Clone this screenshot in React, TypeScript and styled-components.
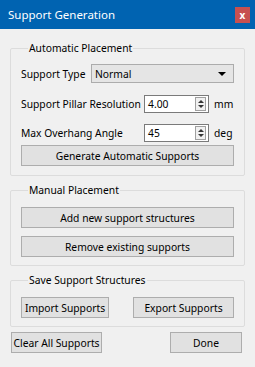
import React from "react";
import styled, { createGlobalStyle } from "styled-components";

const GlobalStyle = createGlobalStyle`
  html, body {
    margin: 0;
    padding: 0;
    background: #f0f0f0;
  }
  body {
    font-family: "Noto Sans", "Open Sans", sans-serif;
    font-size: 10.3px;
    color: #000;
  }
`;

const Window = styled.div`
  width: 255px;
  height: 367px;
  background: #f0f0f0;
  display: flex;
  flex-direction: column;
  overflow: hidden;
`;

const TitleBar = styled.div`
  height: 29px;
  background: #0063b1;
  display: flex;
  align-items: center;
  padding: 0 5px 0 8px;
  color: #fff;
  font-size: 11.5px;
  flex-shrink: 0;
`;

const Title = styled.span`
  flex: 1;
  margin-top: -1px;
`;

const CloseButton = styled.div`
  width: 15px;
  height: 16px;
  background: #c75050;
  color: #fff;
  font-size: 10px;
  font-weight: bold;
  display: flex;
  align-items: center;
  justify-content: center;
  line-height: 1;
`;

const Body = styled.div`
  padding: 12px 10px 0 10px;
  display: flex;
  flex-direction: column;
`;

const Group = styled.fieldset<{ $pt: number; $pb: number; $mb: number }>`
  margin: 0 0 ${(p) => p.$mb}px 0;
  padding: ${(p) => p.$pt}px 10px ${(p) => p.$pb}px 10px;
  border: 1px solid #dcdcdc;
  border-radius: 2px;
  min-width: 0;
  display: flex;
  flex-direction: column;
`;

const Legend = styled.legend`
  padding: 0 1px;
  margin-left: 7px;
  line-height: 14px;
`;

const Row = styled.div<{ $mt?: number }>`
  display: flex;
  align-items: center;
  margin-top: ${(p) => p.$mt ?? 0}px;
  height: 19px;
`;

const Label = styled.span<{ $w: number }>`
  width: ${(p) => p.$w}px;
  flex-shrink: 0;
  white-space: nowrap;
`;

const Combo = styled.div`
  width: 143px;
  height: 19px;
  box-sizing: border-box;
  background: #e5e5e5;
  border: 1px solid #acacac;
  display: flex;
  align-items: center;
  padding: 0 7px 0 3px;
`;

const ComboText = styled.span`
  flex: 1;
`;

const Arrow = styled.span`
  width: 0;
  height: 0;
  border-left: 4px solid transparent;
  border-right: 4px solid transparent;
  border-top: 4px solid #000;
`;

const Spin = styled.div`
  width: 65px;
  height: 18px;
  box-sizing: border-box;
  background: #fff;
  border: 1px solid #7a7a7a;
  display: flex;
  align-items: center;
  padding-left: 3px;
`;

const SpinValue = styled.span`
  flex: 1;
`;

const SpinButtons = styled.div`
  width: 11px;
  height: 14px;
  margin-right: 2px;
  box-sizing: border-box;
  border: 1px solid #a0a0a0;
  background: #f0f0f0;
  display: flex;
  flex-direction: column;
  align-items: center;
  justify-content: space-around;
  padding: 1px 0;
`;

const SmallArrow = styled.span<{ $up?: boolean }>`
  width: 0;
  height: 0;
  border-left: 3px solid transparent;
  border-right: 3px solid transparent;
  ${(p) =>
    p.$up ? "border-bottom: 3px solid #333;" : "border-top: 3px solid #333;"}
`;

const Unit = styled.span`
  margin-left: 5px;
`;

const Button = styled.button<{ $w?: number; $mt?: number }>`
  width: ${(p) => (p.$w ? `${p.$w}px` : "100%")};
  height: 21px;
  margin-top: ${(p) => p.$mt ?? 0}px;
  box-sizing: border-box;
  background: #e1e1e1;
  border: 1px solid #adadad;
  border-radius: 0;
  font-family: inherit;
  font-size: inherit;
  color: #000;
  padding: 0;
  white-space: nowrap;
`;

const ButtonRow = styled.div<{ $mt?: number }>`
  display: flex;
  justify-content: space-between;
  margin-top: ${(p) => p.$mt ?? 0}px;
`;

const Footer = styled.div`
  display: flex;
  justify-content: space-between;
  padding: 0 3px 0 1px;
`;

const SpinBox = ({ value }: { value: string }) => (
  <Spin>
    <SpinValue>{value}</SpinValue>
    <SpinButtons>
      <SmallArrow $up />
      <SmallArrow />
    </SpinButtons>
  </Spin>
);

export default function App() {
  return (
    <Window>
      <GlobalStyle />
      <TitleBar>
        <Title>Support Generation</Title>
        <CloseButton>x</CloseButton>
      </TitleBar>
      <Body>
        <Group $pt={9} $pb={9} $mb={7}>
          <Legend>Automatic Placement</Legend>
          <Row>
            <Label $w={70}>Support Type</Label>
            <Combo>
              <ComboText>Normal</ComboText>
              <Arrow />
            </Combo>
          </Row>
          <Row $mt={11}>
            <Label $w={123}>Support Pillar Resolution</Label>
            <SpinBox value="4.00" />
            <Unit>mm</Unit>
          </Row>
          <Row $mt={10}>
            <Label $w={123}>Max Overhang Angle</Label>
            <SpinBox value="45" />
            <Unit>deg</Unit>
          </Row>
          <Button $mt={3}>Generate Automatic Supports</Button>
        </Group>
        <Group $pt={10} $pb={8} $mb={7}>
          <Legend>Manual Placement</Legend>
          <Button>Add new support structures</Button>
          <Button $mt={8}>Remove existing supports</Button>
        </Group>
        <Group $pt={10} $pb={8} $mb={5}>
          <Legend>Save Support Structures</Legend>
          <ButtonRow>
            <Button $w={88}>Import Supports</Button>
            <Button $w={101}>Export Supports</Button>
          </ButtonRow>
        </Group>
        <Footer>
          <Button $w={91}>Clear All Supports</Button>
          <Button $w={72}>Done</Button>
        </Footer>
      </Body>
    </Window>
  );
}
